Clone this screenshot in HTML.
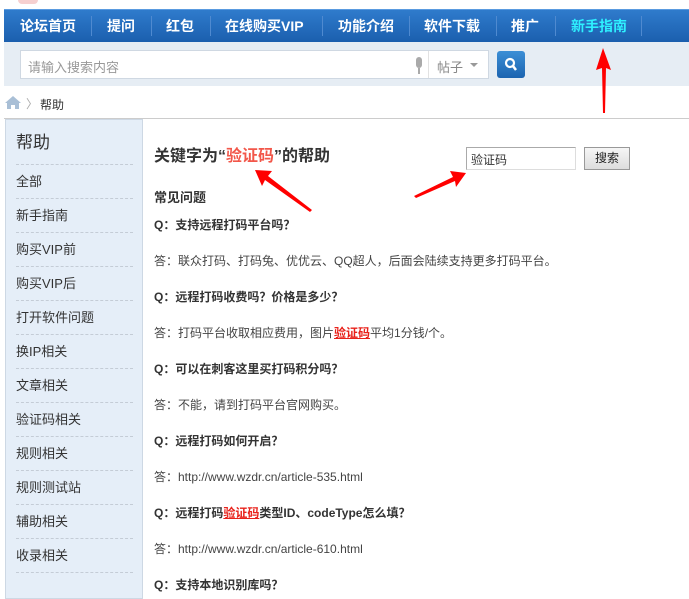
<!DOCTYPE html>
<html><head><meta charset="utf-8"><style>
*{margin:0;padding:0;box-sizing:border-box}
body{width:689px;height:595px;overflow:hidden;background:#fff;font-family:"Liberation Sans","Noto Sans CJK SC",sans-serif;position:relative;color:#333}
.abs{position:absolute}
.nav{left:4px;top:9px;width:685px;height:33px;background:linear-gradient(#2f7bcc,#1b5fae);border-top:1px solid #5a9be0}
.nav span{position:absolute;top:0;height:33px;line-height:32px;color:#fff;font-weight:bold;font-size:14px}
.sep{position:absolute;top:6px;width:1px;height:20px;background:#4f8ad0}
.sbar{left:4px;top:42px;width:685px;height:44px;background:#e6edf4}
.side{left:5px;top:119px;width:138px;height:480px;background:#e5eef8;border:1px solid #cdd8e4}
.side div{position:absolute;left:10px;width:117px;font-size:13px;color:#333;border-bottom:1px dashed #c4ccd6;height:34px;line-height:34px}
.c{position:absolute;left:154px;font-size:12px;color:#444}
.q{font-weight:bold;color:#333}
.r{color:#e8211a;font-weight:bold;text-decoration:underline}
</style></head><body>
<div class="abs" style="left:18px;top:0;width:20px;height:4px;background:#f6d0d0;border-radius:0 0 10px 10px"></div>
<div class="abs nav">
<span style="left:16px">论坛首页</span><div class="sep" style="left:87px"></div>
<span style="left:103px">提问</span><div class="sep" style="left:147px"></div>
<span style="left:162px">红包</span><div class="sep" style="left:206px"></div>
<span style="left:221px">在线购买VIP</span><div class="sep" style="left:318px"></div>
<span style="left:334px">功能介绍</span><div class="sep" style="left:405px"></div>
<span style="left:420px">软件下载</span><div class="sep" style="left:492px"></div>
<span style="left:507px">推广</span><div class="sep" style="left:551px"></div>
<span style="left:567px;color:#2ef0ff">新手指南</span><div class="sep" style="left:637px"></div>
</div>
<div class="abs sbar"></div>
<div class="abs" style="left:20px;top:50px;width:469px;height:29px;background:#fff;border:1px solid #cfd8e2"></div>
<div class="abs" style="left:28px;top:57px;font-size:13px;color:#999">请输入搜索内容</div>
<div class="abs" style="left:416px;top:57px;width:6px;height:11px;border-radius:3px;background:#aaa"></div>
<div class="abs" style="left:418px;top:68px;width:2px;height:6px;background:#aaa"></div>
<div class="abs" style="left:428px;top:51px;width:1px;height:27px;background:#e2e2e2"></div>
<div class="abs" style="left:437px;top:57px;font-size:13px;color:#888">帖子</div>
<div class="abs" style="left:470px;top:63px;border:4px solid transparent;border-top:4px solid #999"></div>
<div class="abs" style="left:497px;top:51px;width:28px;height:27px;background:linear-gradient(#3c8fd6,#1c64b0);border-radius:3px"></div>
<svg class="abs" style="left:504px;top:57px" width="14" height="16"><circle cx="6" cy="6" r="4" stroke="#fff" stroke-width="2.2" fill="none"/><line x1="9" y1="9" x2="12" y2="13" stroke="#fff" stroke-width="2.5"/></svg>
<svg class="abs" style="left:5px;top:96px" width="16" height="13"><path d="M8 0L0 7h2v6h4V9h4v4h4V7h2z" fill="#a9bfd6"/></svg>
<div class="abs" style="left:26px;top:95px;font-size:12px;color:#aaa">〉</div>
<div class="abs" style="left:40px;top:96px;font-size:12px;color:#333">帮助</div>
<div class="abs" style="left:4px;top:118px;width:685px;height:1px;background:#ccc"></div>
<div class="abs side">
<div style="top:0;height:45px;line-height:45px;font-size:17px;color:#333;left:10px">帮助</div>
<div style="top:45px">全部</div><div style="top:79px">新手指南</div><div style="top:113px">购买VIP前</div><div style="top:147px">购买VIP后</div><div style="top:181px">打开软件问题</div><div style="top:215px">换IP相关</div><div style="top:249px">文章相关</div><div style="top:283px">验证码相关</div><div style="top:317px">规则相关</div><div style="top:351px">规则测试站</div><div style="top:385px">辅助相关</div><div style="top:419px">收录相关</div>
</div>
<div class="c" style="top:142px;font-size:16px;font-weight:bold;color:#333">关键字为“<span style="color:#f2574a">验证码</span>”的帮助</div>
<div class="abs" style="left:466px;top:147px;width:110px;height:23px;border:1px solid #aaa;border-bottom-color:#ddd;border-right-color:#ddd;font-size:12px;padding:3px 4px;color:#333">验证码</div>
<div class="abs" style="left:584px;top:147px;width:46px;height:23px;border:1px solid #999;background:linear-gradient(#f6f6f6,#ddd);font-size:12px;text-align:center;line-height:21px;color:#222">搜索</div>
<div class="c q" style="top:187px;font-size:13px">常见问题</div>
<div class="c q" style="top:216px">Q：支持远程打码平台吗？</div>
<div class="c" style="top:252px">答：联众打码、打码兔、优优云、QQ超人，后面会陆续支持更多打码平台。</div>
<div class="c q" style="top:288px">Q：远程打码收费吗？价格是多少？</div>
<div class="c" style="top:324px">答：打码平台收取相应费用，图片<span class="r">验证码</span>平均1分钱/个。</div>
<div class="c q" style="top:360px">Q：可以在刺客这里买打码积分吗？</div>
<div class="c" style="top:396px">答：不能，请到打码平台官网购买。</div>
<div class="c q" style="top:432px">Q：远程打码如何开启？</div>
<div class="c" style="top:468px">答：http://www.wzdr.cn/article-535.html</div>
<div class="c q" style="top:504px">Q：远程打码<span class="r">验证码</span>类型ID、codeType怎么填？</div>
<div class="c" style="top:540px">答：http://www.wzdr.cn/article-610.html</div>
<div class="c q" style="top:576px">Q：支持本地识别库吗？</div>
<svg class="abs" style="left:0;top:0" width="689" height="595">
<polygon points="603,48 596,70 602,68 603,113 605,113 606,68 611,70" fill="#f00"/>
<polygon points="255,170 272,171 268,176 312,210 310,212 265,180 262,186" fill="#f00"/>
<polygon points="466,173 450,171 453,177 414,196 416,198 455,181 456,187" fill="#f00"/>
</svg>
</body></html>
